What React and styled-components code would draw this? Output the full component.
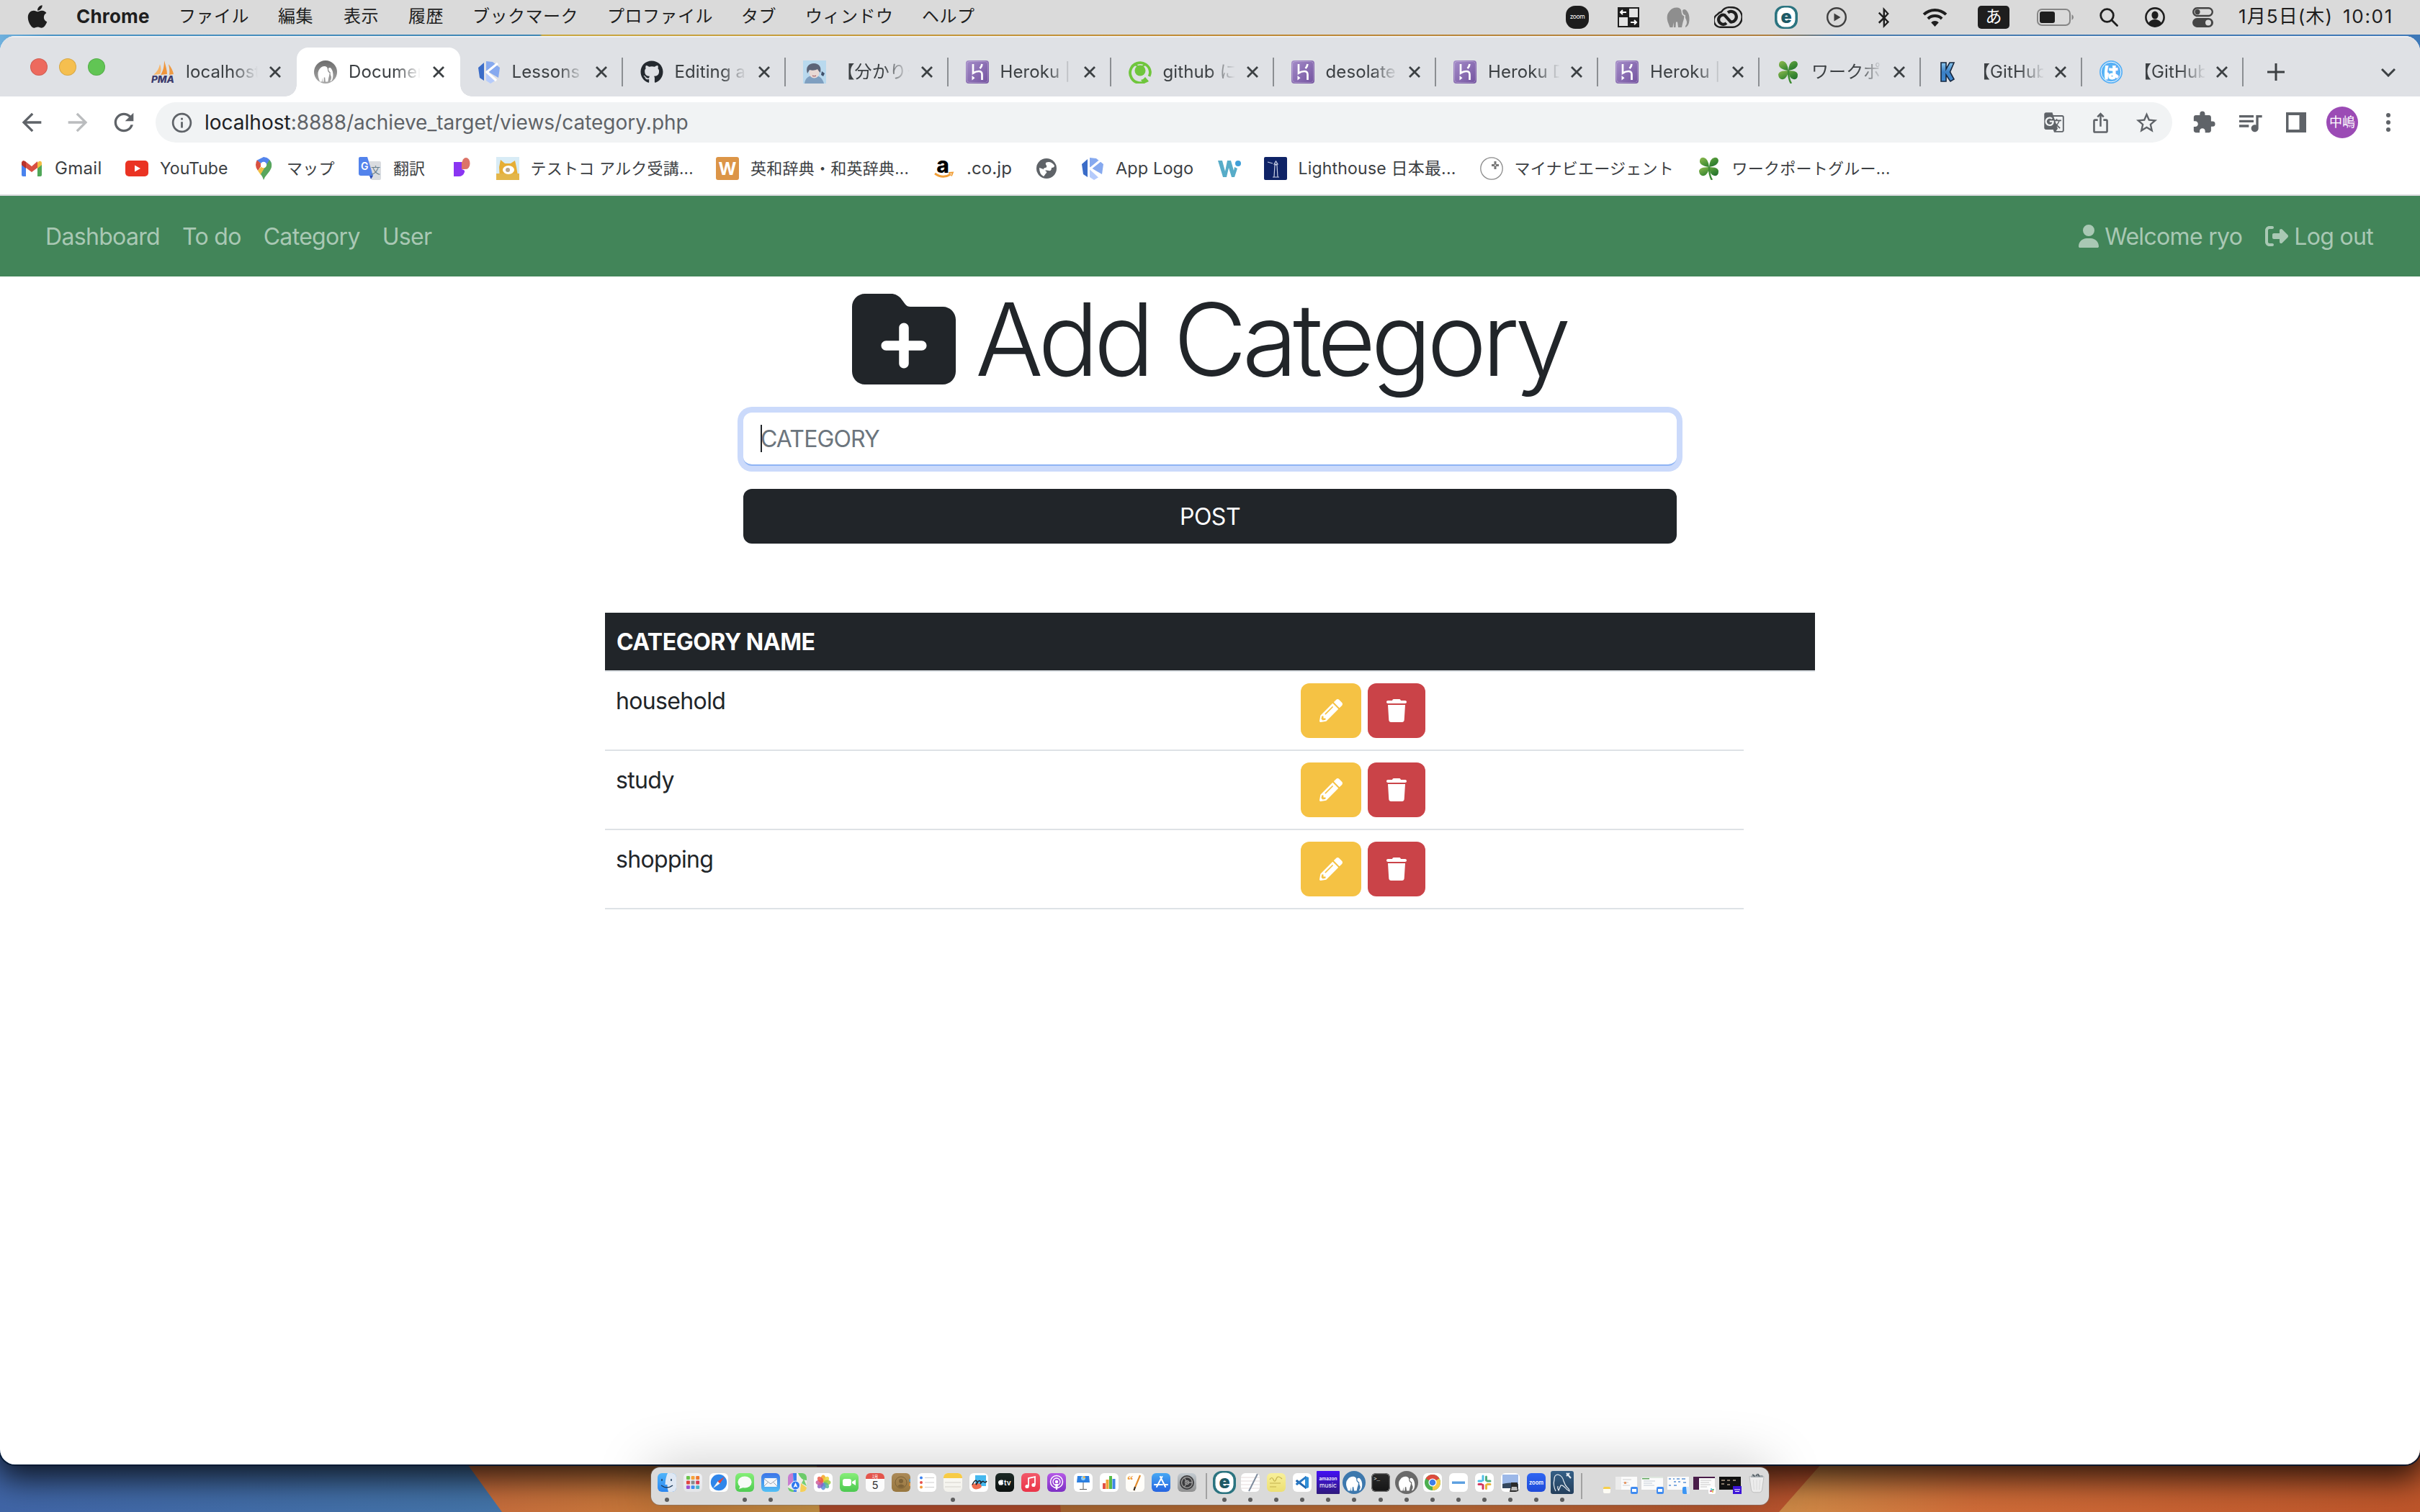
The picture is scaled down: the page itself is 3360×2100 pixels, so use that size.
import React from 'react';
import styled, { createGlobalStyle, css } from 'styled-components';
import { FaApple, FaGithub, FaBluetoothB, FaPencilAlt } from 'react-icons/fa';
import { FaFolderPlus, FaUser, FaRightFromBracket, FaTrash } from 'react-icons/fa6';
import {
  MdArrowBack, MdArrowForward, MdRefresh, MdInfoOutline, MdGTranslate, MdIosShare,
  MdStarBorder, MdExtension, MdQueueMusic,
} from 'react-icons/md';

const GlobalStyle = createGlobalStyle`
  *, *::before, *::after { box-sizing: border-box; }
  body {
    margin: 0;
    background: #33588f;
    font-family: Inter, "Noto Sans CJK JP", sans-serif;
    overflow: hidden;
  }
  svg { display: block; flex: none; }
`;

/* ---------- desktop ---------- */

const Desktop = styled.div`
  position: relative;
  width: 3360px;
  height: 2100px;
  overflow: hidden;
  display: flex;
  flex-direction: column;
`;

const WallpaperLayer = styled.svg`
  position: absolute;
  inset: 0;
`;

const Wallpaper = () => (
  <WallpaperLayer width="3360" height="2100" viewBox="0 0 3360 2100">
    <defs>
      <linearGradient id="wpTop" x1="0" x2="1">
        <stop offset="0" stopColor="#6fb0dd" />
        <stop offset=".02" stopColor="#4a93c4" />
        <stop offset=".223" stopColor="#3f86b4" />
        <stop offset=".224" stopColor="#c9a840" />
        <stop offset=".5" stopColor="#c08a34" />
        <stop offset=".73" stopColor="#b08040" />
        <stop offset=".76" stopColor="#4a7cae" />
        <stop offset="1" stopColor="#3d78b8" />
      </linearGradient>
      <linearGradient id="wpBlue" x1="0" x2="1">
        <stop offset="0" stopColor="#4065a6" />
        <stop offset="1" stopColor="#4478a8" />
      </linearGradient>
      <linearGradient id="wpOrange" x1="0" x2="1">
        <stop offset="0" stopColor="#c4683c" />
        <stop offset=".5" stopColor="#c8783a" />
        <stop offset="1" stopColor="#d0a04c" />
      </linearGradient>
      <linearGradient id="wpMid" x1="0" x2="1">
        <stop offset="0" stopColor="#b06c34" />
        <stop offset=".5" stopColor="#c06c38" />
        <stop offset="1" stopColor="#bb4f2c" />
      </linearGradient>
      <linearGradient id="wpRight" x1="0" x2="1">
        <stop offset="0" stopColor="#d08c48" />
        <stop offset=".3" stopColor="#cf6c38" />
        <stop offset="1" stopColor="#bd552a" />
      </linearGradient>
    </defs>
    <rect width="3360" height="1000" fill="url(#wpTop)" />
    <rect y="1000" width="900" height="1100" fill="url(#wpBlue)" />
    <path d="M600 1966 L697 2100 H1200 V1966z" fill="url(#wpOrange)" />
    <path d="M1132 2000 L1138 2100 H1500 V2000z" fill="#b04c2c" />
    <path d="M1464 2000 L1473 2100 H2600 V2000z" fill="url(#wpMid)" />
    <path d="M2558 2000 L2470 2100 H3360 V1000 H2700z" fill="url(#wpRight)" />
  </WallpaperLayer>
);

/* ---------- menu bar ---------- */

const MenuBar = styled.header`
  position: relative;
  height: 48px;
  flex: none;
  display: flex;
  justify-content: space-between;
  align-items: center;
  padding: 0 37px 0 34px;
  background: #dadada;
  color: #1e1e1e;
`;

const MenuGroup = styled.div`
  display: flex;
  align-items: center;
  height: 100%;
`;

const MenuItem = styled.div`
  width: ${(p) => p.$w}px;
  margin-right: 40px;
  display: flex;
  font-size: ${(p) => (p.$app ? 26 : 24)}px;
  font-weight: ${(p) => (p.$app ? 700 : 400)};
  letter-spacing: ${(p) => (p.$app ? 0.2 : 0.5)}px;
  line-height: 46px;
  padding-bottom: 2px;
  white-space: nowrap;
`;

const StatusItem = styled.div`
  width: ${(p) => p.$w}px;
  margin-left: ${(p) => p.$gap}px;
  display: flex;
  justify-content: center;
  align-items: center;
`;

const Clock = styled.div`
  width: ${(p) => p.$w}px;
  margin-left: ${(p) => p.$gap}px;
  font-size: 26px;
  letter-spacing: ${(p) => p.$ls}px;
  line-height: 46px;
  padding-bottom: 2px;
  white-space: nowrap;
`;

const KanaBadge = styled.div`
  width: 44px;
  height: 32px;
  border-radius: 5px;
  background: #1e1e1e;
  color: #fff;
  font-size: 23px;
  line-height: 31px;
  text-align: center;
`;

const ZoomBadge = styled.div`
  width: 32px;
  height: 32px;
  border-radius: 13px;
  background: #1c1c1c;
  color: #fff;
  font-size: 8.5px;
  letter-spacing: -0.4px;
  line-height: 31px;
  text-align: center;
`;

const menus = [
  ['ファイル', 98], ['編集', 51], ['表示', 50], ['履歴', 49], ['ブックマーク', 147],
  ['プロファイル', 146], ['タブ', 49], ['ウィンドウ', 122], ['ヘルプ', 80],
];

const elephantBody = 'M4.500 30 L1.500 22 Q-1 13 4 7.500 Q8 2 15 2.500 Q20 3 20.500 8 Q20.500 13 24.500 14.500 Q24 19 22.500 23 L21 30 H16 L15 22.500 H13 L12.500 30 H10 L9.500 23 L8.500 30z';
const elephantHead = 'M22 6.500 Q25 3.500 28 7 Q32 12 31.500 20 Q31 28 26 30 Q25.500 28 27.500 26 Q29 22 26 17 L26 13 Q22 12.500 22 6.500z';

const Elephant = ({ size = 32, color = '#8e8e8e' }) => (
  <svg width={size} height={size} viewBox="0 0 32 32" fill={color}>
    <path d={elephantBody} />
    <path d={elephantHead} />
  </svg>
);

const GridArrows = () => (
  <svg width="30" height="28" viewBox="0 0 30 28">
    <rect width="30" height="28" fill="#1e1e1e" />
    <path d="M16 2h12v12h-12zM2 14h12v12h-12z" fill="#e4e4e4" />
    <path d="M4 7h8M7 4L4 7l3 3M18 21h8M23 18l3 3-3 3" stroke="#fff" strokeWidth="2" fill="none" />
  </svg>
);

const CreativeCloud = () => (
  <svg width="39" height="30" viewBox="0 0 39 30" fill="none" stroke="#1e1e1e">
    <path d="M10.500 28.700 A9.500 9.500 0 0 1 4.500 11 Q7 8 10 7.500 A14 13 0 0 1 24 1.300 A13.700 13.700 0 0 1 26 28.700 z" strokeWidth="2.400" />
    <path d="M17 23 A6.500 6.500 0 1 1 14.500 12 L23 21.500 A7.300 7.300 0 1 0 19 8.500" strokeWidth="4.200" />
  </svg>
);

const EyeletE = ({ size = 32, radius = 12 }) => (
  <svg width={size} height={size} viewBox="0 0 32 32">
    <rect width="32" height="32" rx={radius} fill="#2b7480" />
    <rect x="3.500" y="2.500" width="25" height="27" rx={radius - 2} fill="#fff" />
    <text x="16" y="24" textAnchor="middle" fontFamily="Inter" fontWeight="900" fontSize="25" fill="#1d5965">e</text>
  </svg>
);

const PlayCircle = () => (
  <svg width="28" height="28" viewBox="0 0 28 28">
    <circle cx="14" cy="14" r="12.800" fill="none" stroke="#3f3f3f" strokeWidth="2.400" />
    <path d="M10.500 8.500l9 5.500-9 5.500z" fill="#3f3f3f" />
  </svg>
);

const Wifi = () => (
  <svg width="35" height="26" viewBox="0 0 36 27">
    <path d="M2 9.500a23 23 0 0 1 32 0M8 15.500a14.500 14.500 0 0 1 20 0" fill="none" stroke="#1e1e1e" strokeWidth="4.200" />
    <path d="M18 27l-5.500-6a8 8 0 0 1 11 0z" fill="#1e1e1e" />
  </svg>
);

const Battery = () => (
  <svg width="51" height="24" viewBox="0 0 51 24">
    <rect x="1" y="1" width="45" height="22" rx="6" fill="none" stroke="#868686" strokeWidth="2" />
    <rect x="4" y="4" width="21" height="16" rx="3" fill="#1e1e1e" />
    <path d="M48.500 8q2.500 1.500 2.500 4t-2.500 4z" fill="#868686" />
  </svg>
);

const Magnifier = () => (
  <svg width="26" height="26" viewBox="0 0 26 26" fill="none" stroke="#1e1e1e" strokeWidth="2.800">
    <circle cx="10.500" cy="10.500" r="8.800" />
    <path d="M17 17l7.500 7.500" strokeLinecap="round" />
  </svg>
);

const UserCircle = () => (
  <svg width="28" height="28" viewBox="0 0 28 28">
    <circle cx="14" cy="14" r="12.600" fill="none" stroke="#1e1e1e" strokeWidth="2.600" />
    <ellipse cx="14" cy="11" rx="4.600" ry="5.600" fill="#1e1e1e" />
    <path d="M5 22q3-5 9-5t9 5q-4 4.500-9 4.500T5 22z" fill="#1e1e1e" />
  </svg>
);

const ControlCenter = () => (
  <svg width="29" height="28" viewBox="0 0 29 28">
    <rect x="1.200" y="1.200" width="26.600" height="10.800" rx="5.400" fill="none" stroke="#444" strokeWidth="2.400" />
    <circle cx="7" cy="6.600" r="3.600" fill="#444" />
    <rect y="15" width="29" height="13" rx="6.500" fill="#444" />
    <circle cx="22" cy="21.500" r="4" fill="#dadada" />
  </svg>
);

/* ---------- browser chrome ---------- */

const BrowserWindow = styled.section`
  position: relative;
  height: 1984px;
  flex: none;
  margin-top: 2px;
  border-radius: 21px;
  overflow: hidden;
  background: #fff;
  display: flex;
  flex-direction: column;
`;

const WindowShadow = styled.div`
  position: relative;
  border-radius: 21px;
  box-shadow: 0 0 0 2px rgba(2, 24, 50, 0.85), 0 14px 44px 6px rgba(0, 0, 0, 0.78);
`;

const TabStrip = styled.div`
  height: 84px;
  flex: none;
  display: flex;
  align-items: flex-end;
  background: #dfe1e5;
  box-shadow: inset 0 2px 0 #eff0f2;
`;

const TrafficLights = styled.div`
  width: 186px;
  height: 82px;
  padding: 0 0 0 42px;
  display: flex;
  align-items: center;
  gap: 16px;
`;

const Light = styled.span`
  width: 24px;
  height: 24px;
  border-radius: 50%;
  background: ${(p) => p.$color};
  box-shadow: inset 0 0 0 1px rgba(0, 0, 0, 0.12);
`;

const flare = css`
  content: '';
  position: absolute;
  bottom: 0;
  width: 16px;
  height: 16px;
`;

const TabBox = styled.div`
  position: relative;
  width: ${(p) => p.$w}px;
  height: 68px;
  padding-left: 24px;
  display: flex;
  align-items: center;
  border-radius: 16px 16px 0 0;
  ${(p) => p.$active && css`
    background: #fff;
    &::before { ${flare} left: -16px; background: radial-gradient(circle at 0 0, transparent 15.5px, #fff 16px); }
    &::after { ${flare} right: -16px; background: radial-gradient(circle at 100% 0, transparent 15.5px, #fff 16px); }
  `}
`;

const TabTitle = styled.span`
  flex: 1;
  min-width: 0;
  margin: 0 16px;
  font-size: 24px;
  line-height: 34px;
  letter-spacing: 0.1px;
  color: #3c4043;
  white-space: nowrap;
  overflow: hidden;
  mask-image: linear-gradient(90deg, #000 64px, transparent 100px);
`;

const TabDivider = styled.span`
  width: 2px;
  height: 40px;
  margin-left: 20px;
  background: ${(p) => (p.$hidden ? 'transparent' : '#8b8e92')};
`;

const Cross = () => (
  <svg width="16" height="16" viewBox="0 0 16 16" stroke="#3c4043" strokeWidth="2.800">
    <path d="M1 1l14 14M15 1L1 15" />
  </svg>
);

const NewTab = styled.div`
  width: 90px;
  height: 68px;
  display: flex;
  align-items: center;
  justify-content: center;
`;

const TabSearch = styled(NewTab)`
  width: 88px;
  margin-left: auto;
`;

const Toolbar = styled.div`
  height: 72px;
  flex: none;
  padding: 0 12px;
  display: flex;
  align-items: center;
  color: #5f6368;
`;

const ToolSlot = styled.div`
  width: 64px;
  flex: none;
  display: flex;
  justify-content: center;
  color: ${(p) => (p.$dim ? '#babcbe' : 'inherit')};
`;

const Omnibox = styled.div`
  flex: 1;
  height: 56px;
  margin: 0 12px;
  padding: 0 4px 0 20px;
  border-radius: 28px;
  background: #f1f3f4;
  display: flex;
  align-items: center;
`;

const Url = styled.div`
  flex: 1;
  margin-left: 15px;
  font-size: 28px;
  line-height: 40px;
  color: #5f6368;
  white-space: nowrap;
`;

const Host = styled.span`
  color: #202124;
`;

const Avatar = styled.div`
  width: 44px;
  height: 44px;
  border-radius: 50%;
  background: #9b4bb5;
  color: #fff;
  font-size: 18px;
  line-height: 43px;
  text-align: center;
`;

const BookmarkBar = styled.nav`
  height: 66px;
  flex: none;
  padding: 0 0 8px 28px;
  border-bottom: 2px solid #d9dadd;
  display: flex;
  align-items: center;
`;

const Bookmark = styled.div`
  display: flex;
  align-items: center;
  margin-right: 32px;
`;

const BookmarkLabel = styled.span`
  width: ${(p) => p.$w}px;
  margin: 0 2px 0 16px;
  font-size: ${(p) => p.$size || 22}px;
  letter-spacing: ${(p) => p.$ls ?? 0.25}px;
  line-height: 36px;
  color: #3c4043;
  white-space: nowrap;
`;

/* ---------- site icons (32 x 32) ---------- */

const Ico = ({ children }) => <svg width="32" height="32" viewBox="0 0 32 32">{children}</svg>;

const PmaIcon = () => (
  <Ico>
    <path d="M18 0c2 7 4 14 4 19l-9 1c4-6 5-13 5-20z" fill="#f0953b" />
    <path d="M12 5c-1 6-4 11-9 15l9-1c2-4 2-9 0-14z" fill="#f6b66c" />
    <path d="M24 5c4 5 6 9 7 14l-6 1c1-5 0-10-1-15z" fill="#ee9a43" />
    <text x="0" y="31" fontFamily="Inter" fontStyle="italic" fontWeight="800" fontSize="12.500" textLength="32" lengthAdjust="spacingAndGlyphs" fill="#3b3a6b">PMA</text>
  </Ico>
);

const MampIcon = () => (
  <Ico>
    <defs><linearGradient id="mg" x2="0" y2="1"><stop stopColor="#6d6d6d" /><stop offset="1" stopColor="#a8a8a8" /></linearGradient></defs>
    <circle cx="16" cy="16" r="16" fill="url(#mg)" />
    <g transform="translate(5 6) scale(.68 .78)" fill="#fff">
      <path d={elephantBody} />
      <path d={elephantHead} />
    </g>
  </Ico>
);

const KredoIcon = () => (
  <Ico>
    <path d="M9 3v25l-6-4L1 10z" fill="#3a6cc8" />
    <path d="M12 1l9 1 10 8-2 14-17-10z" fill="#86a9ef" />
    <path d="M12 17l14 10-8 5-6-4z" fill="#b5cbfb" />
    <path d="M28 4L13 16l13 12" stroke="#fff" strokeWidth="3.200" fill="none" />
  </Ico>
);

const PortraitIcon = () => (
  <Ico>
    <rect width="32" height="32" fill="#b9d9ee" />
    <path d="M2 32c1-8 6-11 13-11s12 3 14 11z" fill="#7f9fc0" />
    <ellipse cx="15.500" cy="17" rx="7" ry="7.500" fill="#e9d9d4" />
    <path d="M6 18c-3-9 2-14 9-14s11 5 9 13c-2-2-3-3-4-5-3 2-8 2-11 1-1 2-2 3-3 5z" fill="#5c6478" />
    <path d="M26 15l4 3-2 4-3-2z" fill="#40506a" />
    <path d="M13 21q2.500 1.500 5 0" stroke="#a0616a" strokeWidth="1.200" fill="none" />
  </Ico>
);

const HerokuIcon = () => (
  <Ico>
    <defs><linearGradient id="hk" x1="0" x2="1" y2="1"><stop stopColor="#a48cc8" /><stop offset="1" stopColor="#73529f" /></linearGradient></defs>
    <rect width="32" height="32" rx="4" fill="url(#hk)" />
    <rect x="1.500" y="1.500" width="29" height="29" rx="3.500" fill="none" stroke="#fff" strokeOpacity=".25" />
    <path d="M10 5v12.500q4-2.500 8-2.500 4.500 0 4.500 4.500V27M22.500 5q-.5 3.500-3 6" stroke="#fff" strokeWidth="2.700" fill="none" />
    <path d="M8.500 21l4 3.200-4 3.300z" fill="#fff" />
  </Ico>
);

const QiitaIcon = () => (
  <Ico>
    <path d="M26 27A14 14 0 1 1 30 16q0 3-1.500 6" fill="none" stroke="#6fc63c" strokeWidth="3.800" />
    <circle cx="16" cy="14" r="7.500" fill="#6fc63c" />
    <path d="M9 6l4 2M23 6l-4 2" stroke="#6fc63c" strokeWidth="2" />
    <path d="M17 27q4-1 6-4l5 6q-4 3-9 1z" fill="#6fc63c" />
  </Ico>
);

const CloverIcon = () => (
  <Ico>
    <defs><linearGradient id="cl" x1="0" x2="1" y1="0" y2="1"><stop stopColor="#8fba4f" /><stop offset=".6" stopColor="#3f8c34" /><stop offset="1" stopColor="#1d6b2a" /></linearGradient></defs>
    <path d="M16 14Q2 12 3 5Q4 0 9 1Q15 3 16 14Q17 2 23 1Q28 0 29 5Q29 12 16 14z" fill="url(#cl)" />
    <path d="M16 14Q2 14 2 20Q3 27 9 26Q15 24 16 14Q17 25 23 26Q29 27 29 20Q29 14 16 14z" fill="url(#cl)" />
    <path d="M16 14q0 12 4 18" stroke="#3f8c34" strokeWidth="2.400" fill="none" />
  </Ico>
);

const BlueKIcon = () => (
  <Ico>
    <defs><linearGradient id="bk" x2="0" y2="1"><stop stopColor="#8cc8f0" /><stop offset=".5" stopColor="#3b7fc4" /><stop offset="1" stopColor="#3f8ad2" /></linearGradient></defs>
    <path d="M4 3h7v9l5-9h6l-5.500 13 5.500 10-5 3-6-9v9H4z" fill="url(#bk)" stroke="#16273f" strokeWidth="1.600" />
  </Ico>
);

const HaIcon = () => (
  <Ico>
    <circle cx="16" cy="16" r="16" fill="#58b0f5" />
    <circle cx="16" cy="16" r="13.800" fill="none" stroke="#fff" strokeWidth="1" />
    <text x="16" y="24" textAnchor="middle" fontFamily="Noto Sans CJK JP" fontWeight="900" fontSize="21" fill="#fff" stroke="#fff" strokeWidth=".8">は</text>
  </Ico>
);

const GmailIcon = () => (
  <Ico>
    <path d="M2 9l6 4v14H4a2 2 0 0 1-2-2z" fill="#4a83ee" />
    <path d="M24 13l6-4v16a2 2 0 0 1-2 2h-4z" fill="#4fa758" />
    <path d="M24 8l2-2q4-1 4 3v2l-6 5z" fill="#f2bd42" />
    <path d="M2 11V8q1-4 5-2l9 7 8-7v9l-8 6-8-6z" fill="#d94f42" />
    <path d="M2 8v3l6 5V7Q3 3 2 8z" fill="#b8322c" />
  </Ico>
);

const YoutubeIcon = () => (
  <Ico>
    <rect y="5" width="32" height="22" rx="5" fill="#ea3323" />
    <path d="M13 11.500l8 4.500-8 4.500z" fill="#fff" />
  </Ico>
);

const MapsIcon = () => (
  <Ico>
    <path d="M6 5L16 0q10 1 11 11H16z" fill="#5384ec" />
    <path d="M5 11q0-4 2-6.500l7 6L8 19q-3-4-3-8z" fill="#d85140" />
    <path d="M8 19l8-9 5 4-9 11z" fill="#f1be42" />
    <path d="M24 4q4 4 3 10-1 4-6 10-3 3-5 8-1-4-4-8z" fill="#58a65c" />
    <circle cx="16" cy="11" r="4.200" fill="#fff" />
  </Ico>
);

const TranslateIcon = () => (
  <Ico>
    <path d="M14 6h15a2 2 0 0 1 2 2v22a2 2 0 0 1-2 2H18z" fill="#dadce0" />
    <path d="M2 0h10l8 26H3a3 3 0 0 1-3-3V2a2 2 0 0 1 2-2z" fill="#5383ec" />
    <path d="M15 26h5l-3 5z" fill="#2e4fb8" />
    <text x="3" y="18" fontFamily="Inter" fontWeight="600" fontSize="14" fill="#fff">G</text>
    <text x="17" y="23" fontFamily="Noto Sans CJK JP" fontSize="13" fill="#6a7f8c">文</text>
  </Ico>
);

const PurpleIcon = () => (
  <Ico>
    <path d="M5 7h11v10q5 1 4 4-2 6-8 6H5z" fill="#8a35f2" />
    <ellipse cx="22" cy="9" rx="5.500" ry="8" fill="#dc7468" />
    <path d="M16 7h5v10h-5z" fill="#dc7468" />
  </Ico>
);

const TestIcon = () => (
  <Ico>
    <rect width="32" height="32" fill="#d8ecf6" />
    <path d="M5 32L4 14 6 4l6 5h8l6-4 2 9 3 18z" fill="#e6ae35" />
    <rect y="23" width="32" height="9" fill="#e3b64a" />
    <ellipse cx="17" cy="18" rx="8" ry="6" fill="#fff" />
    <circle cx="16" cy="18" r="3" fill="#b9a58a" />
  </Ico>
);

const WIcon = () => (
  <Ico>
    <rect width="32" height="32" rx="3" fill="#dc9547" />
    <text x="16" y="25" textAnchor="middle" fontFamily="Inter" fontWeight="700" fontSize="24" fill="#fff">W</text>
  </Ico>
);

const AmazonIcon = () => (
  <Ico>
    <text x="15" y="22" textAnchor="middle" fontFamily="Inter" fontWeight="800" fontSize="30" fill="#000">a</text>
    <path d="M4 23q11 8 22 1" stroke="#f19f38" strokeWidth="2.800" fill="none" />
    <path d="M23 22l6-.5-2 5" fill="none" stroke="#f19f38" strokeWidth="1.800" />
  </Ico>
);

const GlobeIcon = () => (
  <Ico>
    <circle cx="16" cy="16" r="14" fill="#5f6368" />
    <path d="M15 8q7-3 12 4 0 3-4 3 0 5-4 4-3-1-6 0-3-3 1-4 3 0 2-3-2-2-1-4zM6 15q5 1 8 4 4 2 1 4-2 3-3 4-6-3-6-12z" fill="#fff" />
  </Ico>
);

const WDotIcon = () => (
  <Ico>
    <path d="M0 5h6l4 15 3-15h5l4 14 1-5 4 2-4 12h-4l-4-13-3 13H7z" fill="#57acc8" />
    <circle cx="28" cy="9" r="4" fill="#3f9fd8" />
  </Ico>
);

const LighthouseIcon = () => (
  <Ico>
    <rect width="32" height="32" rx="2" fill="#0f2366" />
    <path d="M14 28l1-17h3l1 17M12 28h9M14 10l2.500-4L19 10zM5 7l7 2" stroke="#c9cfe4" strokeWidth="1.200" fill="none" />
  </Ico>
);

const MynaviIcon = () => (
  <Ico>
    <circle cx="16" cy="16" r="15.200" fill="#fff" stroke="#8a8a8a" strokeWidth="1.300" />
    <path d="M21 6v11M16 11.500h10" stroke="#777" strokeWidth="3" />
    <circle cx="21" cy="11.500" r="1" fill="#fff" />
  </Ico>
);

const GithubIcon = () => <FaGithub size={32} color="#24292f" />;

const tabs = [
  { icon: PmaIcon, title: 'localhost:8888', w: 226, bare: true },
  { icon: MampIcon, title: 'Document', w: 226.5, active: true, bare: true },
  { icon: KredoIcon, title: 'Lessons', w: 226 },
  { icon: GithubIcon, title: 'Editing achieve', w: 226 },
  { icon: PortraitIcon, title: '【分かりやすく', w: 226 },
  { icon: HerokuIcon, title: 'Heroku | Dash', w: 226 },
  { icon: QiitaIcon, title: 'github にpush', w: 226 },
  { icon: HerokuIcon, title: 'desolate-inlet', w: 225.5 },
  { icon: HerokuIcon, title: 'Heroku Data', w: 225 },
  { icon: HerokuIcon, title: 'Heroku | Error', w: 224 },
  { icon: CloverIcon, title: 'ワークポート', w: 224 },
  { icon: BlueKIcon, title: '【GitHub】', w: 224 },
  { icon: HaIcon, title: '【GitHub】', w: 224 },
];

const bookmarks = [
  { icon: GmailIcon, label: 'Gmail', w: 64, size: 24, ls: 0.3 },
  { icon: YoutubeIcon, label: 'YouTube', w: 94, size: 23, ls: 0 },
  { icon: MapsIcon, label: 'マップ', w: 66 },
  { icon: TranslateIcon, label: '翻訳', w: 44.5, ls: 0 },
  { icon: PurpleIcon },
  { icon: TestIcon, label: 'テストコ アルク受講...', w: 223.5 },
  { icon: WIcon, label: '英和辞典・和英辞典...', w: 218 },
  { icon: AmazonIcon, label: '.co.jp', w: 61, size: 24, ls: 0.1 },
  { icon: GlobeIcon },
  { icon: KredoIcon, label: 'App Logo', w: 107.5, size: 23.5, ls: 0.1 },
  { icon: WDotIcon },
  { icon: LighthouseIcon, label: 'Lighthouse 日本最...', w: 218, size: 23, ls: 0.2 },
  { icon: MynaviIcon, label: 'マイナビエージェント', w: 220 },
  { icon: CloverIcon, label: 'ワークポートグルー...', w: 218 },
];

/* ---------- page ---------- */

const Navbar = styled.nav`
  height: 112px;
  flex: none;
  padding: 0 65px 0 63px;
  display: flex;
  justify-content: space-between;
  align-items: center;
  background: #428559;
`;

const NavGroup = styled.div`
  display: flex;
  align-items: center;
  gap: ${(p) => p.$gap}px;
`;

const NavLink = styled.a`
  display: flex;
  align-items: center;
  gap: 8px;
  font-size: 32px;
  line-height: 48px;
  letter-spacing: -0.68px;
  color: #a9c8b4;
  white-space: nowrap;
`;

const NavText = styled.span`
  padding-top: 2px;
`;

const UserIcon = styled(FaUser)`
  width: 28px;
  height: 32px;
`;

const Main = styled.main`
  flex: 1;
  display: flex;
  flex-direction: column;
  align-items: center;
`;

const Title = styled.h1`
  height: 173px;
  margin: 0 2px 16px 0;
  display: flex;
  align-items: center;
  gap: 27px;
  font-size: 140px;
  font-weight: 300;
  letter-spacing: -6.6px;
  line-height: 171px;
  color: #212529;
  white-space: nowrap;
`;

const TitleText = styled.span`
  padding-top: 2px;
`;

const Form = styled.form`
  width: 1296px;
  display: flex;
  flex-direction: column;
  gap: 32px;
`;

const Field = styled.div`
  height: 74px;
  padding: 2px 24px 0;
  display: flex;
  align-items: center;
  border-radius: 12px;
  border-bottom: 2px solid #8fb4f4;
  background: #fff;
  box-shadow: 0 0 0 8px #cbdafb;
  font-size: 32px;
  letter-spacing: -0.88px;
  line-height: 48px;
  color: #6c757d;
`;

const Caret = styled.span`
  width: 2px;
  height: 38px;
  margin: -2px -2px 0 0;
  background: #212529;
`;

const Submit = styled.button`
  height: 76px;
  padding: 2px 0 0;
  border: 0;
  border-radius: 12px;
  background: #212529;
  color: #fff;
  font: 400 32px/48px Inter, sans-serif;
  letter-spacing: -0.5px;
`;

const Table = styled.section`
  width: 1680px;
  margin-top: 96px;
  font-size: 32px;
  line-height: 48px;
  color: #212529;
`;

const TableHead = styled.div`
  height: 82px;
  padding: 17px 16px 0;
  border-bottom: 2px solid #dee2e6;
  background: #212529;
  background-clip: padding-box;
  color: #fff;
  font-weight: 700;
  letter-spacing: -0.5px;
`;

const TableRow = styled.div`
  width: 1581px;
  height: 110px;
  padding: 16px 0 16px 15px;
  display: grid;
  grid-template-columns: 951px 1fr;
  border-bottom: 2px solid #dee2e6;
`;

const CategoryName = styled.span`
  padding-top: 1px;
  letter-spacing: -0.65px;
`;

const Actions = styled.div`
  display: flex;
  gap: 9px;
`;

const ActionButton = styled.button`
  width: ${(p) => (p.$danger ? 80 : 84)}px;
  height: 76px;
  padding: 0;
  border: 0;
  border-radius: 12px;
  display: flex;
  align-items: center;
  justify-content: center;
  background: ${(p) => (p.$danger ? '#ca4348' : '#f5c244')};
  color: #fff;
`;

/* ---------- dock ---------- */

const DockArea = styled.footer`
  position: relative;
  margin-top: 4px;
  display: flex;
  justify-content: center;
`;

const DockPanel = styled.div`
  width: 1552px;
  height: 52px;
  padding-left: 4px;
  display: flex;
  align-items: flex-start;
  border-radius: 12px;
  background: #dadada;
  box-shadow: 0 0 0 1px rgba(120, 120, 120, 0.45), 0 0 76px rgba(0, 0, 0, 0.25);
`;

const DockSlot = styled.div`
  width: 36.1px;
  height: 52px;
  padding-top: ${(p) => (p.$large ? 5 : 8)}px;
  display: flex;
  flex-direction: column;
  align-items: center;
  justify-content: space-between;
  padding-bottom: 4px;
`;

const Dot = styled.span`
  width: 6px;
  height: 6px;
  border-radius: 50%;
  background: ${(p) => (p.$on ? '#5e5e5e' : 'transparent')};
`;

const DockDivider = styled.span`
  width: 2px;
  height: 36px;
  margin: 8px ${(p) => p.$r}px 0 ${(p) => p.$l}px;
  background: #a2a2a2;
`;

const Thumb = styled.div`
  position: relative;
  width: 30px;
  height: 18px;
  margin: 13px 6px 0 0;
  background: #fbfbfb;
`;

const Badge = styled.div`
  position: absolute;
  right: -1px;
  bottom: -6px;
`;

const StickyNote = styled.div`
  width: 10px;
  height: 9px;
  margin: 27px 7px 0 0;
  border-radius: 2px;
  background: linear-gradient(#f6cf4c 35%, #fdfcf4 35%);
`;

const Trash = styled.div`
  margin: 6px 0 0 5px;
`;

const Tile = ({ id, from = '#fff', to = from, children, size = 26 }) => (
  <svg width={size} height={size} viewBox="0 0 26 26">
    <defs>
      <linearGradient id={`t-${id}`} x2="0" y2="1"><stop stopColor={from} /><stop offset="1" stopColor={to} /></linearGradient>
      <clipPath id={`c-${id}`}><rect width="26" height="26" rx="6" /></clipPath>
    </defs>
    <g clipPath={`url(#c-${id})`}>
      <rect width="26" height="26" fill={`url(#t-${id})`} />
      {children}
    </g>
  </svg>
);

const padColors = ['#6cc24a', '#f5a33b', '#ef7a32', '#e0463e', '#8b8b8b', '#d83a52', '#9b4fd0', '#3f8df0', '#49b6c8'];
const petals = ['#f5a623', '#e9d53a', '#9ccb3b', '#57b893', '#5a8fd8', '#8a62c4', '#cf5a9a', '#ec5b4a'];

const systemApps = [
  [<Tile id="finder" from="#4fb4fa" to="#2b86f0">
    <path d="M14 0h12v26H15q-2-6-1.500-10h-3Q11 6 14 0z" fill="#dfe8f4" />
    <path d="M6 8v3M19 8v3M5 17q8 6 16 0" stroke="#1d3b5c" strokeWidth="1.500" fill="none" />
  </Tile>, true],
  [<Tile id="launch" from="#f1f2f4" to="#e4e5e8">
    {padColors.map((c, i) => <rect key={c} x={4 + (i % 3) * 6.600} y={4 + Math.floor(i / 3) * 6.600} width="4.900" height="4.900" rx="1" fill={c} />)}
  </Tile>],
  [<Tile id="safari">
    <circle cx="13" cy="13" r="11.200" fill="#2f86ea" />
    <path d="M21 5l-6.500 9.500-3-3z" fill="#e8453c" /><path d="M5 21l6.500-9.500 3 3z" fill="#f4f4f4" />
  </Tile>],
  [<Tile id="msg" from="#84ef77" to="#4fcb52">
    <ellipse cx="13" cy="12.500" rx="9.600" ry="8" fill="#f8fbf8" /><path d="M7 17l-2 5 6-2z" fill="#f8fbf8" />
  </Tile>, true],
  [<Tile id="mail" from="#3c74e8" to="#52c0f5">
    <rect x="4" y="7" width="18" height="12" rx="1.500" fill="#f4f6fa" /><path d="M4 8l9 7 9-7M4 18l6-6M22 18l-6-6" stroke="#97a3b3" fill="none" />
  </Tile>, true],
  [<Tile id="maps" from="#f4f1ea" to="#e8e8e4">
    <path d="M0 0h7v12L0 18z" fill="#c77dd0" /><path d="M14 0h12v10q-8 0-12-10zM0 20l12 6H0z" fill="#6ccb6a" />
    <path d="M7 0h5v26h-4z" fill="#3a7ef0" /><path d="M18 14l8 6v6h-9z" fill="#f5cf58" /><path d="M22 8l4 10-7-4z" fill="#77cf72" />
    <circle cx="10.500" cy="17" r="6" fill="#2f78ee" stroke="#fff" /><path d="M10.500 13l3 7-3-1.500-3 1.500z" fill="#fff" />
  </Tile>],
  [<Tile id="photos">
    {petals.map((c, i) => <ellipse key={c} cx="13" cy="7.500" rx="3.400" ry="5" fill={c} fillOpacity=".85" transform={`rotate(${i * 45} 13 13)`} />)}
  </Tile>],
  [<Tile id="facetime" from="#86ee78" to="#4cc850">
    <rect x="4" y="8" width="12" height="10" rx="3" fill="#fff" /><path d="M17 12l5-3v8l-5-3z" fill="#fff" />
  </Tile>],
  [<Tile id="cal" from="#fcfcfc">
    <rect width="26" height="8" fill="#e3554c" />
    <text x="13" y="6.600" fontSize="5.500" textAnchor="middle" fontFamily="Noto Sans CJK JP" fill="#fff">1月</text>
    <text x="13" y="22" fontSize="15" textAnchor="middle" fontFamily="Inter" fill="#333">5</text>
  </Tile>],
  [<Tile id="contacts" from="#ab8a58" to="#98773f">
    <circle cx="13" cy="13" r="8" fill="none" stroke="#7d6237" /><circle cx="13" cy="11" r="3" fill="#7d6237" /><path d="M8 18q5-5 10 0-5 4-10 0z" fill="#7d6237" />
    <path d="M24.500 8h2v4h-2z" fill="#4aa3e0" /><path d="M24.500 14h2v4h-2z" fill="#ec9a3a" />
  </Tile>],
  [<Tile id="rem">
    <path d="M10 6.500h13M10 13h13M10 19.500h13" stroke="#cfcfcf" />
    <circle cx="5" cy="6.500" r="2" fill="#3b82f0" /><circle cx="5" cy="13" r="2" fill="#e8504a" /><circle cx="5" cy="19.500" r="2" fill="#f09a3a" />
  </Tile>],
  [<Tile id="notes" from="#fbfaf4" to="#f2f1ec">
    <rect width="26" height="7" fill="#f7cb46" /><path d="M2 13h22M2 19h22" stroke="#d4d2ca" />
  </Tile>, true],
  [<Tile id="free">
    <path d="M8 3h15v15H8z" fill="#45b8ee" /><path d="M3 16q8-4 13 0 3 4-4 6-8 2-9-6z" fill="#ef6d50" />
    <path d="M4 16q4-8 6-5t-1 5q4-7 6-5 2 2 0 4 3-5 5-3t4-1" stroke="#20262e" strokeWidth="1.600" fill="none" />
  </Tile>],
  [<Tile id="tv" from="#1c2a26" to="#0c1110">
    <path d="M8 10q2-1 3 .4-1.600 2 .2 3.600-1 3-2.600 2.600-1-.4-2 0Q5 17 4 13.500 4 9.500 7 10q1-1 1.500-2z" fill="#fff" />
    <text x="12" y="17" fontSize="10" fontFamily="Inter" fontWeight="600" fill="#fff">tv</text>
  </Tile>],
  [<Tile id="music" from="#f2596a" to="#ea3448">
    <path d="M10 18V7l9-2v11" stroke="#fff" strokeWidth="1.800" fill="none" /><circle cx="8" cy="18.500" r="2.600" fill="#fff" /><circle cx="17" cy="16.500" r="2.600" fill="#fff" />
  </Tile>],
  [<Tile id="pod" from="#b558e6" to="#7d30c4">
    <circle cx="13" cy="12" r="8.500" stroke="#fff" strokeWidth="1.500" fill="none" /><circle cx="13" cy="12" r="5" stroke="#fff" strokeWidth="1.300" fill="none" />
    <circle cx="13" cy="12" r="2.200" fill="#fff" /><path d="M11 15h4l-1 8h-2z" fill="#fff" />
  </Tile>],
  [<Tile id="keynote">
    <path d="M5 4h16l1 9H4z" fill="#2c7fe0" /><path d="M12.500 13h1v9h-1zM8 22h10v1H8z" fill="#5a5a5a" /><circle cx="13" cy="7" r="3" fill="#8fd0f8" /><path d="M13 4a3 3 0 0 1 3 3h-3z" fill="#f0b040" />
  </Tile>],
  [<Tile id="numbers">
    <path d="M4 14h4v8H4z" fill="#e25146" /><path d="M8.500 9h4v13h-4z" fill="#f0a238" /><path d="M13 4h4v18h-4z" fill="#55bb4a" /><path d="M17.500 8h4v14h-4z" fill="#3f86e4" />
  </Tile>],
  [<Tile id="pages" from="#fffdf9">
    <text x="2" y="15" fontSize="17" fontFamily="Liberation Serif" fontWeight="700" fill="#ef9a38">“</text>
    <path d="M20 3L12 22l-.5 2" stroke="#e08a2c" strokeWidth="2.200" fill="none" /><path d="M13 19l-1.500 5" stroke="#2d2d2d" strokeWidth="2" />
  </Tile>],
  [<Tile id="store" from="#46a8f4" to="#2664e0">
    <path d="M14.500 5L7 19M12 5l7 14M4 16h11M18 16h4" stroke="#fff" strokeWidth="2" strokeLinecap="round" />
  </Tile>],
  [<Tile id="settings" from="#c3cbd1" to="#8f8f8f">
    <circle cx="13" cy="13" r="10" fill="#3b3b3d" /><circle cx="13" cy="13" r="7.500" fill="none" stroke="#9a9a9a" strokeWidth="1.500" />
    <circle cx="13" cy="13" r="2.500" fill="none" stroke="#9a9a9a" strokeWidth="1.300" /><path d="M13 13h8M13 13l-4-7M13 13l-4 7" stroke="#9a9a9a" strokeWidth="1.300" />
  </Tile>],
];

const Circled = ({ fill }) => (
  <svg width="32" height="32" viewBox="0 0 32 32">
    <circle cx="16" cy="16" r="16" fill={fill} />
    <g transform="translate(4.500 6) scale(.72)" fill="#fff">
      <path d={elephantBody} />
      <path d={elephantHead} />
    </g>
  </svg>
);

const userApps = [
  [<EyeletE />, true],
  [<Tile id="textedit">
    <path d="M0 6h26M0 11h26M0 16h26M0 21h26" stroke="#d9c9c9" strokeWidth=".7" /><path d="M23 1L11 25" stroke="#7e8b9c" strokeWidth="2" />
  </Tile>],
  [<Tile id="sticky" from="#f8f09a" to="#ecdf74">
    <path d="M4 9q3-5 5 0t4-1 8 0M4 14h15M4 19h9" stroke="#c4b24e" strokeWidth="1.200" fill="none" />
  </Tile>],
  [<Tile id="vscode">
    <path d="M17 4l5 2v14l-5 2z" fill="#2f8fd8" /><path d="M4 10.500l2-1.500L18 18.500V22L4 11.500z" fill="#2167b0" /><path d="M4 15.500l2 1.500L18 7.500V4L4 14.500z" fill="#2878c4" />
  </Tile>],
  [<svg width="32" height="32" viewBox="0 0 32 32">
    <defs><linearGradient id="amz" x2="0" y2="1"><stop stopColor="#4410f4" /><stop offset="1" stopColor="#2f1a7c" /></linearGradient></defs>
    <rect width="32" height="32" rx="1" fill="url(#amz)" />
    <text x="16" y="13" fontSize="6.500" textAnchor="middle" fontFamily="Inter" fontWeight="600" fill="#fff">amazon</text>
    <text x="16" y="23" fontSize="8.500" textAnchor="middle" fontFamily="Inter" fill="#fff">music</text>
  </svg>, true],
  [<Circled fill="#3d78ad" />, true],
  [<Tile id="term" from="#2a2a2a" to="#151515">
    <rect x=".7" y=".7" width="24.600" height="24.600" rx="5.500" fill="none" stroke="#8c8c8c" />
    <text x="3" y="10" fontSize="7.500" fontFamily="Liberation Mono" fill="#fff">&gt;_</text>
  </Tile>],
  [<Circled fill="#6a6a6a" />, true],
  [<Tile id="chrome">
    <circle cx="13" cy="13" r="11" fill="#4caf50" /><path d="M13 13L3.500 7.500A11 11 0 0 1 22.500 7.500z" fill="#dd4b3e" /><path d="M13 13l9.500-5.500A11 11 0 0 1 13 24z" fill="#f6c944" />
    <circle cx="13" cy="13" r="5.600" fill="#fff" /><circle cx="13" cy="13" r="4.300" fill="#3f7fe8" />
  </Tile>],
  [<Tile id="dash"><rect x="4" y="11.500" width="18" height="3.400" fill="#5a9fe0" /></Tile>],
  [<Tile id="slack">
    <path d="M11 4v6" stroke="#4fc0e8" strokeWidth="3" strokeLinecap="round" /><path d="M15.500 5v5" stroke="#4fae7c" strokeWidth="3" strokeLinecap="round" />
    <path d="M5 11h4" stroke="#4fc0e8" strokeWidth="3" strokeLinecap="round" /><path d="M17 11h4" stroke="#4fae7c" strokeWidth="3" strokeLinecap="round" />
    <path d="M5 15.500h4M11 16.500v5" stroke="#d33860" strokeWidth="3" strokeLinecap="round" /><path d="M17 15.500h4M15.500 16.500v5" stroke="#e8b43c" strokeWidth="3" strokeLinecap="round" />
  </Tile>],
  [<Tile id="preview">
    <rect x="2" y="2" width="22" height="14" fill="#9cb8e8" /><path d="M2 15q10-3 22 0v6H2z" fill="#33475f" /><path d="M14 13h9v5l2 8H12l2-8z" fill="#2b2b2b" /><path d="M15 19h7l1 5h-9z" fill="#bcbcbc" />
  </Tile>],
  [<Tile id="zoomapp" from="#2f66f2" to="#1f4ad8">
    <text x="13" y="15.500" fontSize="7.500" textAnchor="middle" fontFamily="Inter" fontWeight="600" fill="#fff">zoom</text>
  </Tile>],
  [<svg width="32" height="32" viewBox="0 0 32 32">
    <defs><linearGradient id="sql" x2="0" y2="1"><stop stopColor="#345f86" /><stop offset="1" stopColor="#243f5c" /></linearGradient></defs>
    <rect width="32" height="32" rx="3" fill="url(#sql)" />
    <path d="M7 28Q3 20 5 12 5 5 10 5q6 1 8 9 2 6 5 9 3 2 3 5-4-2-6-5-4-4-6-3l-3 7q-2-3-1-6" fill="none" stroke="#e8eef4" strokeWidth="1.200" />
    <path d="M22 3l6 7M22 7l4-4" stroke="#e8eef4" strokeWidth="2" />
  </svg>, true],
];

const MiniMail = () => (
  <svg width="10" height="10" viewBox="0 0 10 10"><rect width="10" height="10" rx="2" fill="#3f8bf0" /><rect x="2" y="3" width="6" height="4" fill="#fff" /></svg>
);
const MiniFinder = () => (
  <svg width="10" height="10" viewBox="0 0 10 10"><rect width="10" height="10" rx="2" fill="#3a95f4" /><path d="M5 0h5v10H6z" fill="#dbe7f4" /></svg>
);
const MiniSlack = () => (
  <svg width="10" height="10" viewBox="0 0 10 10"><rect width="10" height="10" rx="2" fill="#fff" /><path d="M4 2v3" stroke="#4fc0e8" strokeWidth="1.600" /><path d="M5 4h3" stroke="#4fae7c" strokeWidth="1.600" /><path d="M2 6h3" stroke="#d33860" strokeWidth="1.600" /><path d="M6 5v3" stroke="#e8b43c" strokeWidth="1.600" /></svg>
);
const MiniMusic = () => (
  <svg width="12" height="11" viewBox="0 0 12 11"><rect width="12" height="11" fill="#3c14d8" /><path d="M2 5h8M3 7.500h6" stroke="#fff" /></svg>
);

const thumbs = [
  { art: <><path d="M0 0h8v18H0z" fill="#ececec" /><path d="M10 4h12M10 8h8M10 12h10" stroke="#cfcfcf" /><path d="M12 7h3v3h-3z" fill="#e69a6a" /></>, badge: MiniMail },
  { art: <><path d="M0 0h30v2H0z" fill="#dfe8df" /><path d="M1 2h10v1.500H1z" fill="#63a860" /><path d="M3 6h16M3 9h12M3 12h15" stroke="#c3ccd6" /></>, badge: MiniMail },
  { art: <path d="M2 3h3M8 3h2M13 3h4M20 3h5M9 7h3M15 7h3M22 8h4M2 12h3M9 12h4" stroke="#5b93d8" strokeWidth="1.600" />, badge: MiniFinder },
  { art: <><path d="M0 0h30v2H0zM0 0h8v18H0z" fill="#4a1d4a" /><path d="M10 5h15M10 8h12M10 11h14M10 14h9" stroke="#c8c8c8" /></>, badge: MiniSlack },
  { art: <><path d="M0 0h30v18H0z" fill="#111" /><path d="M3 5h5M11 5h4M19 5h4M3 10h4M11 11h4" stroke="#8a7b6a" strokeWidth="2.200" /></>, badge: MiniMusic },
];

const TrashCan = () => (
  <svg width="22" height="30" viewBox="0 0 24 30">
    <path d="M1 6h22l-3 21q-1 3-4 3H8q-3 0-4-3z" fill="#ececec" stroke="#bdbdbd" />
    <path d="M3 7l3-5 4 2 3-3 4 3 4 0 1 3z" fill="#9aa3a8" /><path d="M6 3l3 3M14 2l2 4M11 5l2-2" stroke="#4d565c" strokeWidth="1.500" />
    <path d="M7 11l1 15M12 11v15M17 11l-1 15" stroke="#d6d6d6" />
  </svg>
);

const categories = ['household', 'study', 'shopping'];

export default function App() {
  return (
    <Desktop>
      <GlobalStyle />
      <Wallpaper />

      <WindowShadow>
        <MenuBar>
          <MenuGroup>
            <MenuItem $w={32}><FaApple size={36} /></MenuItem>
            <MenuItem $w={102} $app>Chrome</MenuItem>
            {menus.map(([label, w]) => <MenuItem key={label} $w={w}>{label}</MenuItem>)}
          </MenuGroup>
          <MenuGroup>
            <StatusItem $w={32} $gap={0}><ZoomBadge>zoom</ZoomBadge></StatusItem>
            <StatusItem $w={30} $gap={40}><GridArrows /></StatusItem>
            <StatusItem $w={32} $gap={38}><Elephant /></StatusItem>
            <StatusItem $w={39} $gap={34}><CreativeCloud /></StatusItem>
            <StatusItem $w={32} $gap={45}><EyeletE /></StatusItem>
            <StatusItem $w={28} $gap={40}><PlayCircle /></StatusItem>
            <StatusItem $w={18} $gap={42}><FaBluetoothB size={29} /></StatusItem>
            <StatusItem $w={35} $gap={45}><Wifi /></StatusItem>
            <StatusItem $w={44} $gap={42}><KanaBadge>あ</KanaBadge></StatusItem>
            <StatusItem $w={51} $gap={38}><Battery /></StatusItem>
            <StatusItem $w={26} $gap={36}><Magnifier /></StatusItem>
            <StatusItem $w={28} $gap={37}><UserCircle /></StatusItem>
            <StatusItem $w={29} $gap={38}><ControlCenter /></StatusItem>
            <Clock $w={129} $gap={35} $ls={1.1}>1月5日(木)</Clock>
            <Clock $w={70} $gap={16} $ls={1.7}>10:01</Clock>
          </MenuGroup>
        </MenuBar>

        <BrowserWindow>
          <TabStrip>
            <TrafficLights>
              <Light $color="#ed6a5e" />
              <Light $color="#f5bf4f" />
              <Light $color="#61c554" />
            </TrafficLights>
            {tabs.map(({ icon: Icon, title, w, active, bare }, i) => (
              <TabBox key={i} $w={w} $active={active}>
                <Icon />
                <TabTitle>{title}</TabTitle>
                <Cross />
                <TabDivider $hidden={bare} />
              </TabBox>
            ))}
            <NewTab>
              <svg width="24" height="24" viewBox="0 0 24 24" stroke="#3c4043" strokeWidth="3"><path d="M12 0v24M0 12h24" /></svg>
            </NewTab>
            <TabSearch>
              <svg width="20" height="13" viewBox="0 0 20 13" fill="none" stroke="#3c4043" strokeWidth="3"><path d="M1 2l9 9 9-9" /></svg>
            </TabSearch>
          </TabStrip>

          <Toolbar>
            <ToolSlot><MdArrowBack size={40} /></ToolSlot>
            <ToolSlot $dim><MdArrowForward size={40} /></ToolSlot>
            <ToolSlot><MdRefresh size={40} /></ToolSlot>
            <Omnibox>
              <MdInfoOutline size={33} />
              <Url><Host>localhost</Host>:8888/achieve_target/views/category.php</Url>
              <ToolSlot><MdGTranslate size={30} /></ToolSlot>
              <ToolSlot><MdIosShare size={31} /></ToolSlot>
              <ToolSlot><MdStarBorder size={35} /></ToolSlot>
            </Omnibox>
            <ToolSlot><MdExtension size={34} /></ToolSlot>
            <ToolSlot><MdQueueMusic size={40} /></ToolSlot>
            <ToolSlot>
              <svg width="28" height="28" viewBox="0 0 28 28"><path fillRule="evenodd" d="M0 0h28v28H0zM3.500 4v20h15V4z" fill="#5f6368" /></svg>
            </ToolSlot>
            <ToolSlot><Avatar>中嶋</Avatar></ToolSlot>
            <ToolSlot>
              <svg width="6" height="26" viewBox="0 0 6 26" fill="#5f6368"><circle cx="3" cy="3" r="3" /><circle cx="3" cy="13" r="3" /><circle cx="3" cy="23" r="3" /></svg>
            </ToolSlot>
          </Toolbar>

          <BookmarkBar>
            {bookmarks.map(({ icon: Icon, label, w, size, ls }, i) => (
              <Bookmark key={i}>
                <Icon />
                {label && <BookmarkLabel $w={w} $size={size} $ls={ls}>{label}</BookmarkLabel>}
              </Bookmark>
            ))}
          </BookmarkBar>

          <Navbar>
            <NavGroup $gap={31}>
              <NavLink><NavText>Dashboard</NavText></NavLink>
              <NavLink><NavText>To do</NavText></NavLink>
              <NavLink><NavText>Category</NavText></NavLink>
              <NavLink><NavText>User</NavText></NavLink>
            </NavGroup>
            <NavGroup $gap={32}>
              <NavLink><UserIcon /><NavText>Welcome ryo</NavText></NavLink>
              <NavLink><FaRightFromBracket size={32} /><NavText>Log out</NavText></NavLink>
            </NavGroup>
          </Navbar>

          <Main>
            <Title>
              <FaFolderPlus size={144} />
              <TitleText>Add Category</TitleText>
            </Title>
            <Form>
              <Field><Caret />CATEGORY</Field>
              <Submit type="button">POST</Submit>
            </Form>
            <Table>
              <TableHead>CATEGORY NAME</TableHead>
              {categories.map((name) => (
                <TableRow key={name}>
                  <CategoryName>{name}</CategoryName>
                  <Actions>
                    <ActionButton><FaPencilAlt size={32} /></ActionButton>
                    <ActionButton $danger><FaTrash size={32} /></ActionButton>
                  </Actions>
                </TableRow>
              ))}
            </Table>
          </Main>
        </BrowserWindow>
      </WindowShadow>

      <DockArea>
        <DockPanel>
          {systemApps.map(([icon, running], i) => (
            <DockSlot key={i}>{icon}<Dot $on={running} /></DockSlot>
          ))}
          <DockDivider $l={8} $r={6} />
          {userApps.map(([icon, large], i) => (
            <DockSlot key={i} $large={large}>{icon}<Dot $on /></DockSlot>
          ))}
          <DockDivider $l={8} $r={29} />
          <StickyNote />
          {thumbs.map(({ art, badge: Mini }, i) => (
            <Thumb key={i}>
              <svg width="30" height="18" viewBox="0 0 30 18">{art}</svg>
              <Badge><Mini /></Badge>
            </Thumb>
          ))}
          <Trash><TrashCan /></Trash>
        </DockPanel>
      </DockArea>
    </Desktop>
  );
}
